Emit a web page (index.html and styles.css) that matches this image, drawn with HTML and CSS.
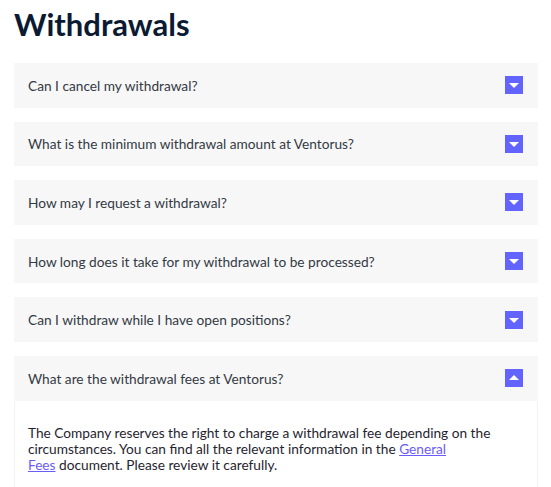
FILE: index.html
```html
<!DOCTYPE html>
<html lang="en">
<head>
<meta charset="utf-8">
<title>Withdrawals</title>
<link rel="stylesheet" href="styles.css">
</head>
<body>
<main class="faq">
  <h1 class="faq-title">Withdrawals</h1>
  <div class="faq-list">
    <div class="faq-item">
      <div class="faq-head"><span class="faq-q">Can I cancel my withdrawal?</span><span class="faq-toggle"><svg viewBox="0 0 18 18" width="18" height="18"><path d="M4 7h10l-5 5z" fill="#fff"/></svg></span></div>
    </div>
    <div class="faq-item">
      <div class="faq-head"><span class="faq-q">What is the minimum withdrawal amount at Ventorus?</span><span class="faq-toggle"><svg viewBox="0 0 18 18" width="18" height="18"><path d="M4 7h10l-5 5z" fill="#fff"/></svg></span></div>
    </div>
    <div class="faq-item">
      <div class="faq-head"><span class="faq-q">How may I request a withdrawal?</span><span class="faq-toggle"><svg viewBox="0 0 18 18" width="18" height="18"><path d="M4 7h10l-5 5z" fill="#fff"/></svg></span></div>
    </div>
    <div class="faq-item">
      <div class="faq-head"><span class="faq-q">How long does it take for my withdrawal to be processed?</span><span class="faq-toggle"><svg viewBox="0 0 18 18" width="18" height="18"><path d="M4 7h10l-5 5z" fill="#fff"/></svg></span></div>
    </div>
    <div class="faq-item">
      <div class="faq-head"><span class="faq-q">Can I withdraw while I have open positions?</span><span class="faq-toggle"><svg viewBox="0 0 18 18" width="18" height="18"><path d="M4 7h10l-5 5z" fill="#fff"/></svg></span></div>
    </div>
    <div class="faq-item open">
      <div class="faq-head"><span class="faq-q">What are the withdrawal fees at Ventorus?</span><span class="faq-toggle"><svg viewBox="0 0 18 18" width="18" height="18"><path d="M4 11h10l-5 -5z" fill="#fff"/></svg></span></div>
      <div class="faq-body">
        <p>The Company reserves the right to charge a withdrawal fee depending on the circumstances. You can find all the relevant information in the <a href="#">General<br>Fees</a> document. Please review it carefully.</p>
      </div>
    </div>
  </div>
</main>
</body>
</html>
```
FILE: styles.css
```css
html, body {
  margin: 0;
  padding: 0;
  background: #fff;
}
body {
  font-family: Lato, "Noto Sans", sans-serif;
  color: #333a44;
}
.faq {
  padding: 4px 13px 0 14px;
}
.faq-title {
  margin: 0 0 19px;
  font-size: 31px;
  line-height: 40px;
  font-weight: 700;
  color: #0b1a33;
}
.faq-list {
  display: flex;
  flex-direction: column;
  gap: 14px;
}
.faq-head {
  height: 44.6px;
  box-sizing: border-box;
  display: flex;
  align-items: center;
  justify-content: space-between;
  padding: 0 15px 0 14px;
  background: #f7f7f7;
  font-size: 13.7px;
}
.faq-toggle {
  width: 18px;
  height: 18px;
  background: #6363ff;
  display: flex;
}
.faq-body {
  border: 1px solid #f2f2f2;
  border-top: none;
  padding: 24px 14px 20px 13px;
}
.faq-body p {
  margin: 0;
  font-size: 13.7px;
  line-height: 16px;
  color: #1f2530;
}
.faq-body a {
  color: #6a5cf6;
}
```
